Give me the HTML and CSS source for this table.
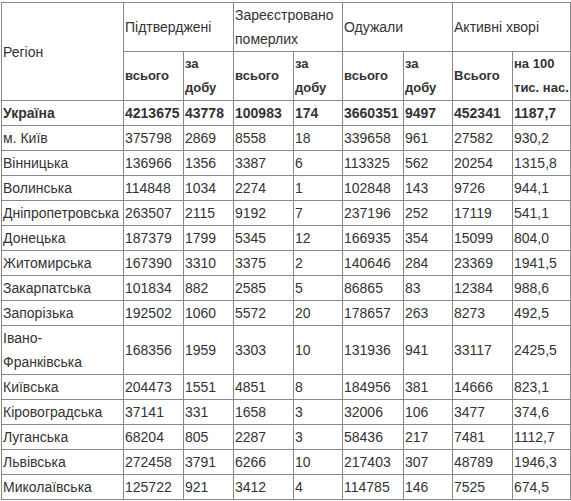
FILE: index.html
```html
<!DOCTYPE html>
<html lang="uk">
<head>
<meta charset="utf-8">
<title>COVID-19 по регіонах</title>
<link rel="stylesheet" href="styles.css">
</head>
<body>
<table class="stats">
  <colgroup>
    <col class="c-region">
    <col class="c-60">
    <col class="c-50">
    <col class="c-60">
    <col class="c-49">
    <col class="c-61">
    <col class="c-49">
    <col class="c-60">
    <col class="c-58">
  </colgroup>
  <thead>
    <tr>
      <th rowspan="2">Регіон</th>
      <th colspan="2">Підтверджені</th>
      <th colspan="2">Зареєстровано померлих</th>
      <th colspan="2">Одужали</th>
      <th colspan="2">Активні хворі</th>
    </tr>
    <tr class="sub">
      <th>всього</th>
      <th>за добу</th>
      <th>всього</th>
      <th>за добу</th>
      <th>всього</th>
      <th>за добу</th>
      <th>Всього</th>
      <th>на 100 тис. нас.</th>
    </tr>
  </thead>
  <tbody>
    <tr class="total"><td>Україна</td><td>4213675</td><td>43778</td><td>100983</td><td>174</td><td>3660351</td><td>9497</td><td>452341</td><td>1187,7</td></tr>
    <tr><td>м. Київ</td><td>375798</td><td>2869</td><td>8558</td><td>18</td><td>339658</td><td>961</td><td>27582</td><td>930,2</td></tr>
    <tr><td>Вінницька</td><td>136966</td><td>1356</td><td>3387</td><td>6</td><td>113325</td><td>562</td><td>20254</td><td>1315,8</td></tr>
    <tr><td>Волинська</td><td>114848</td><td>1034</td><td>2274</td><td>1</td><td>102848</td><td>143</td><td>9726</td><td>944,1</td></tr>
    <tr><td>Дніпропетровська</td><td>263507</td><td>2115</td><td>9192</td><td>7</td><td>237196</td><td>252</td><td>17119</td><td>541,1</td></tr>
    <tr><td>Донецька</td><td>187379</td><td>1799</td><td>5345</td><td>12</td><td>166935</td><td>354</td><td>15099</td><td>804,0</td></tr>
    <tr><td>Житомирська</td><td>167390</td><td>3310</td><td>3375</td><td>2</td><td>140646</td><td>284</td><td>23369</td><td>1941,5</td></tr>
    <tr><td>Закарпатська</td><td>101834</td><td>882</td><td>2585</td><td>5</td><td>86865</td><td>83</td><td>12384</td><td>988,6</td></tr>
    <tr><td>Запорізька</td><td>192502</td><td>1060</td><td>5572</td><td>20</td><td>178657</td><td>263</td><td>8273</td><td>492,5</td></tr>
    <tr><td>Івано-<br>Франківська</td><td>168356</td><td>1959</td><td>3303</td><td>10</td><td>131936</td><td>941</td><td>33117</td><td>2425,5</td></tr>
    <tr><td>Київська</td><td>204473</td><td>1551</td><td>4851</td><td>8</td><td>184956</td><td>381</td><td>14666</td><td>823,1</td></tr>
    <tr><td>Кіровоградська</td><td>37141</td><td>331</td><td>1658</td><td>3</td><td>32006</td><td>106</td><td>3477</td><td>374,6</td></tr>
    <tr><td>Луганська</td><td>68204</td><td>805</td><td>2287</td><td>3</td><td>58436</td><td>217</td><td>7481</td><td>1112,7</td></tr>
    <tr><td>Львівська</td><td>272458</td><td>3791</td><td>6266</td><td>10</td><td>217403</td><td>307</td><td>48789</td><td>1946,3</td></tr>
    <tr><td>Миколаївська</td><td>125722</td><td>921</td><td>3412</td><td>4</td><td>114785</td><td>146</td><td>7525</td><td>674,5</td></tr>
  </tbody>
</table>
</body>
</html>
```

FILE: styles.css
```css
html, body {
  margin: 0;
  padding: 0;
  background: #ffffff;
}

body {
  padding: 2px 0 0 1px;
  font-family: "Liberation Sans", Arial, sans-serif;
  font-size: 14px;
  color: #333333;
}

.stats {
  border-collapse: collapse;
  table-layout: fixed;
  width: 570px;
}

.c-region { width: 122px; }
.c-60 { width: 60px; }
.c-50 { width: 50px; }
.c-49 { width: 49px; }
.c-61 { width: 61px; }
.c-58 { width: 58px; }

.stats th,
.stats td {
  border: 1px solid #888888;
  padding: 0 1px;
  line-height: 24px;
  text-align: left;
  vertical-align: middle;
  font-weight: normal;
}

.stats .sub th {
  font-size: 13px;
  font-weight: bold;
}

.stats .total td {
  font-weight: bold;
}
```
